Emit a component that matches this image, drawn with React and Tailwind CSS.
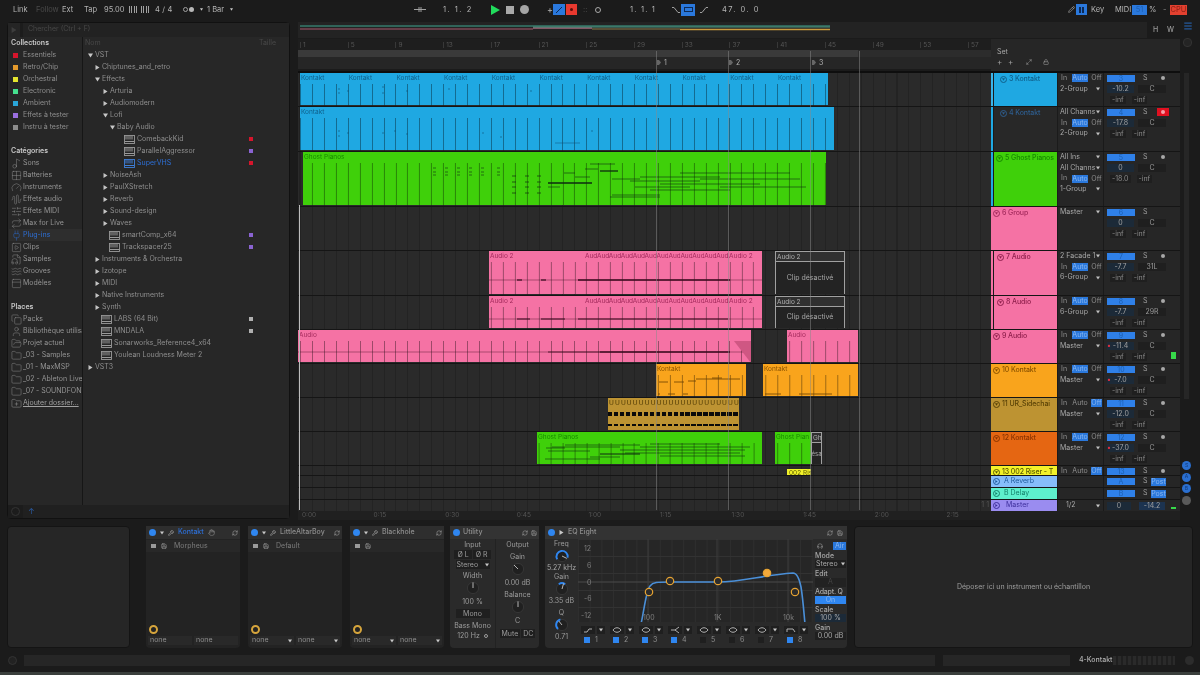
import React from 'react';
import {
  AudioWaveform, Copy, FileAudio, Folder, FolderOpen, FolderPlus, Gauge, Grid2x2, Music2,
  PanelTop, Pencil, Plug, Repeat, SlidersHorizontal, SquarePlay, User, Waves, Wrench, Save, Hand, Headphones,
  Lock, Maximize2, Menu, RefreshCw,
} from 'lucide-react';

const BAR = 11.93;

const Tri = ({ dir = 'down', className = 'text-[#c8c8c8]', s = 5 }) => (
  <svg width={s} height={s} viewBox="0 0 10 10" className={`shrink-0 fill-current ${className}`}>
    {dir === 'down' ? <path d="M0 1h10L5 9z" /> : <path d="M1 0l8 5-8 5z" />}
  </svg>
);

const PluginIcon = ({ blue }) => (
  <svg width="11" height="9" viewBox="0 0 11 9" className={`shrink-0 ${blue ? 'text-[#3f7fd8]' : 'text-[#9a9a9a]'}`}>
    <rect x="0.5" y="0.5" width="10" height="8" fill="none" stroke="currentColor" strokeWidth="0.9" />
    <path d="M2 1v3.5M4 1v3.5M6 1v3.5M8 1v3.5M1 6.5h9" stroke="currentColor" strokeWidth="1" />
  </svg>
);

const collections = [
  ['Essentiels', 'bg-[#d6152c]'],
  ['Retro/Chip', 'bg-[#e59a2c]'],
  ['Orchestral', 'bg-[#e5e52e]'],
  ['Electronic', 'bg-[#45e08e]'],
  ['Ambient', 'bg-[#2aa5d8]'],
  ['Effets à tester', 'bg-[#9b6fe0]'],
  ['Instru à tester', 'bg-[#8c8c8c]'],
];

const categories = [
  ['Sons', Music2],
  ['Batteries', Grid2x2],
  ['Instruments', Gauge],
  ['Effets audio', AudioWaveform],
  ['Effets MIDI', SlidersHorizontal],
  ['Max for Live', Repeat],
  ['Plug-ins', Plug, true],
  ['Clips', SquarePlay],
  ['Samples', FileAudio],
  ['Grooves', Waves],
  ['Modèles', PanelTop],
];

const places = [
  ['Packs', Copy],
  ['Bibliothèque utilisa', User],
  ['Projet actuel', FolderOpen],
  ['_03 - Samples', Folder],
  ['_01 - MaxMSP', Folder],
  ['_02 - Ableton Live', Folder],
  ['_07 - SOUNDFONTS', Folder],
];

// [label, kind, indent class, dot]
const tree = [
  ['VST', 'open', 'pl-[5px]'],
  ['Chiptunes_and_retro', 'closed', 'pl-[12px]'],
  ['Effects', 'open', 'pl-[12px]'],
  ['Arturia', 'closed', 'pl-[20px]'],
  ['Audiomodern', 'closed', 'pl-[20px]'],
  ['Lofi', 'open', 'pl-[20px]'],
  ['Baby Audio', 'open', 'pl-[27px]'],
  ['ComebackKid', 'file', 'pl-[41px]', 'bg-[#d6152c]'],
  ['ParallelAggressor', 'file', 'pl-[41px]', 'bg-[#8a63d2]'],
  ['SuperVHS', 'sel', 'pl-[41px]', 'bg-[#d6152c]'],
  ['NoiseAsh', 'closed', 'pl-[20px]'],
  ['PaulXStretch', 'closed', 'pl-[20px]'],
  ['Reverb', 'closed', 'pl-[20px]'],
  ['Sound-design', 'closed', 'pl-[20px]'],
  ['Waves', 'closed', 'pl-[20px]'],
  ['smartComp_x64', 'file', 'pl-[26px]', 'bg-[#8a63d2]'],
  ['Trackspacer25', 'file', 'pl-[26px]', 'bg-[#8a63d2]'],
  ['Instruments & Orchestra', 'closed', 'pl-[12px]'],
  ['Izotope', 'closed', 'pl-[12px]'],
  ['MIDI', 'closed', 'pl-[12px]'],
  ['Native Instruments', 'closed', 'pl-[12px]'],
  ['Synth', 'closed', 'pl-[12px]'],
  ['LABS (64 Bit)', 'file', 'pl-[18px]', 'bg-[#b0b0b0]'],
  ['MNDALA', 'file', 'pl-[18px]', 'bg-[#b0b0b0]'],
  ['Sonarworks_Reference4_x64', 'file', 'pl-[18px]'],
  ['Youlean Loudness Meter 2', 'file', 'pl-[18px]'],
  ['VST3', 'closed', 'pl-[5px]'],
];

function TopBar() {
  return (
    <div className="flex h-[21px] shrink-0 items-center pb-[2px] pl-[13px] text-[7.5px] text-[#b4b4b4]">
      <span className="w-[23px]">Link</span>
      <span className="w-[26px] text-[#4a4a4a]">Follow</span>
      <span className="w-[22px]">Ext</span>
      <span className="w-[20px]">Tap</span>
      <span className="w-[25px]">95.00</span>
      <span className="flex w-[26px] gap-[3px]">
        <span className="h-[7px] w-[9px] bg-[repeating-linear-gradient(90deg,#a0a0a0_0_1px,transparent_1px_2.5px)]" />
        <span className="h-[7px] w-[9px] bg-[repeating-linear-gradient(90deg,#a0a0a0_0_1px,transparent_1px_2.5px)]" />
      </span>
      <span className="w-[28px] tracking-wide">4 / 4</span>
      <span className="flex w-[17px] items-center gap-[1px]">
        <span className="size-[5px] rounded-full border border-[#a0a0a0]" />
        <span className="size-[5px] rounded-full bg-[#b8b8b8]" />
      </span>
      <span className="w-[7px]"><Tri s={3} /></span>
      <span className="w-[23px]">1 Bar</span>
      <span className="w-[184px]"><Tri s={3} /></span>
      <span className="w-[29px] text-[#a0a0a0]">
        <svg width="12" height="7" viewBox="0 0 12 7" className="stroke-current"><path d="M0 3.5h12M5 1v5M7 1v5" /></svg>
      </span>
      <span className="w-[48px] tracking-[1.5px]">1. 1. 2</span>
      <span className="w-[15px]">
        <svg width="9" height="10" viewBox="0 0 9 10"><path d="M0 0l9 5-9 5z" fill="#21dc5c" /></svg>
      </span>
      <span className="w-[14px]"><span className="block size-[8px] bg-[#a9a9a9]" /></span>
      <span className="w-[27px]"><span className="block size-[9px] rounded-full bg-[#a5a5a5]" /></span>
      <span className="w-[6px] text-[9px] leading-none">+</span>
      <span className="w-[13px]">
        <span className="flex h-[11px] w-[12px] items-center justify-center bg-[#2a78dc]">
          <svg width="8" height="8" viewBox="0 0 8 8" className="stroke-[#0d2a55]"><path d="M1 7L7 1" /></svg>
        </span>
      </span>
      <span className="w-[17px]">
        <span className="flex h-[11px] w-[11px] items-center justify-center bg-[#e8392f]">
          <span className="size-[3px] rounded-full bg-[#5c0c08]" />
        </span>
      </span>
      <span className="w-[12px] text-[#555]">::</span>
      <span className="w-[35px]"><span className="block size-[6px] rounded-full border border-[#a8a8a8]" /></span>
      <span className="w-[42px] tracking-[1.2px]">1. 1. 1</span>
      <span className="w-[9px]">
        <svg width="8" height="6" viewBox="0 0 8 6" className="fill-none stroke-[#a0a0a0]"><path d="M0 0.5h2l4 5h2" /></svg>
      </span>
      <span className="w-[19px]">
        <span className="flex h-[12px] w-[14px] items-center justify-center bg-[#2a78dc]">
          <span className="h-[5px] w-[9px] border border-[#0d2a55]" />
        </span>
      </span>
      <span className="w-[22px]">
        <svg width="8" height="6" viewBox="0 0 8 6" className="fill-none stroke-[#a0a0a0]"><path d="M0 5.5h2l4-5h2" /></svg>
      </span>
      <span className="w-[346px] tracking-[1.5px]">47. 0. 0</span>
      <span className="w-[8px]"><Pencil size={7} /></span>
      <span className="w-[15px]">
        <span className="flex h-[11px] w-[11px] items-center justify-center bg-[#2a78dc]">
          <span className="h-[6px] w-[6px] bg-[repeating-linear-gradient(90deg,#0d2a55_0_2px,transparent_2px_3px)]" />
        </span>
      </span>
      <span className="w-[24px]">Key</span>
      <span className="w-[17px]">MIDI</span>
      <span className="w-[17px]">
        <span className="block h-[10px] w-[15px] bg-[#2a78dc] text-center leading-[10px] text-[#1c5fb0]">51</span>
      </span>
      <span className="w-[14px]">%</span>
      <span className="w-[7px] text-[#888]">-</span>
      <span className="h-[10px] w-[17px] bg-[#e2402f] text-center leading-[10px] text-[#8e2116]">CPU</span>
    </div>
  );
}

function SideRow({ label, Icon, active }) {
  return (
    <div className={`flex h-[12px] items-center gap-[1px] overflow-hidden whitespace-nowrap pl-[2px] ${active ? 'bg-[#2e2e2e] text-[#2d6fd6]' : 'text-[#949494]'}`}>
      <Icon size={11} strokeWidth={1} className="shrink-0" />
      <span>{label}</span>
    </div>
  );
}

function Browser() {
  return (
    <aside className="mt-[1px] flex w-[283px] shrink-0 flex-col rounded-sm border border-[#111] bg-[#272727] text-[7px] leading-[12px]">
      <div className="flex h-[14px] shrink-0 gap-[3px] bg-[#1c1c1c]">
        <span className="flex w-[12px] items-center justify-center bg-[#252525]"><Tri dir="right" s={6} className="text-[#3d3d3d]" /></span>
        <span className="flex-1 bg-[#222] pl-[5px] text-[#484848]">Chercher (Ctrl + F)</span>
      </div>
      <div className="flex min-h-0 flex-1">
        <div className="w-[75px] shrink-0 border-r border-[#161616] pl-[1px]">
          <div className="pl-[2px] font-semibold text-[#c9c9c9]">Collections</div>
          {collections.map(([name, color]) => (
            <div key={name} className="flex h-[12px] items-center gap-[5px] pl-[4px] text-[#8e8e8e]">
              <span className={`size-[5px] shrink-0 ${color}`} />
              {name}
            </div>
          ))}
          <div className="mt-[12px] pl-[2px] font-semibold text-[#c9c9c9]">Catégories</div>
          {categories.map(([name, Icon, active]) => (
            <SideRow key={name} label={name} Icon={Icon} active={active} />
          ))}
          <div className="mt-[12px] pl-[2px] font-semibold text-[#c9c9c9]">Places</div>
          {places.map(([name, Icon]) => (
            <SideRow key={name} label={name} Icon={Icon} />
          ))}
          <div className="flex h-[12px] items-center gap-[1px] pl-[2px] text-[#a0a0a0] underline">
            <FolderPlus size={11} strokeWidth={1} className="shrink-0" />
            Ajouter dossier...
          </div>
        </div>
        <div className="min-w-0 flex-1">
          <div className="flex h-[12px] justify-between pl-[2px] pr-[13px] text-[#484848]">
            <span>Nom</span>
            <span>Taille</span>
          </div>
          {tree.map(([name, kind, indent, dot]) => (
            <div key={name} className={`relative flex h-[12px] items-center gap-[2px] ${indent} ${kind === 'sel' ? 'text-[#2d6fd6]' : 'text-[#8e8e8e]'}`}>
              {kind === 'open' && <Tri />}
              {kind === 'closed' && <Tri dir="right" className="text-[#c4c4c4]" />}
              {(kind === 'file' || kind === 'sel') && <PluginIcon blue={kind === 'sel'} />}
              <span className="truncate">{name}</span>
              {dot && <span className={`absolute left-[166px] top-[4px] size-[4px] ${dot}`} />}
            </div>
          ))}
        </div>
      </div>
      <div className="flex h-[13px] shrink-0 items-center gap-[3px] bg-[#1c1c1c]">
        <span className="ml-[3px] size-[9px] rounded-full border border-[#333]" />
        <span className="flex-1 bg-[#202020] pl-[5px] text-[8px] leading-[13px] text-[#2a5aa0]">↑</span>
      </div>
    </aside>
  );
}

// page x coordinates of the clips, lane starts at x=298
const ghostNotes = [
  ...[433, 445, 457, 469, 481, 497].flatMap((x) => [[x, x + 3, 167, 0.6], [x, x + 3, 171, 0.6], [x, x + 3, 174, 0.6]]),
  ...[512, 525, 537].flatMap((x) => [[x, x + 4, 175, 0.7], [x, x + 4, 181, 0.7], [x, x + 4, 186, 0.7], [x, x + 4, 192, 0.7]]),
  [548, 592, 182, 1.4], [548, 560, 186, 0.6], [564, 575, 172, 0.6], [575, 590, 176, 0.6], [585, 598, 168, 0.6], [600, 618, 170, 1.3],
  [590, 615, 163, 0.6], [612, 640, 178, 0.6], [612, 660, 194, 0.6], [635, 690, 186, 0.6], [630, 700, 180, 0.6], [640, 720, 176, 0.6],
  [650, 730, 189, 0.6], [660, 760, 183, 0.6], [680, 790, 172, 0.6], [700, 800, 178, 0.6], [720, 806, 186, 0.6], [610, 660, 196, 0.6],
];
const ghostNotes2 = [
  [546, 565, 447], [548, 590, 450], [552, 620, 446], [565, 640, 444], [590, 620, 456], [600, 640, 453, 1.2],
  [620, 745, 449], [625, 740, 452], [640, 750, 446], [660, 745, 455], [650, 720, 443], [545, 600, 458],
].map(([a, b, y, t = 0.6]) => [a, b, y, t]);
const cyanMarks = [[338, 88], [338, 92], [347, 90], [382, 86], [382, 92], [406, 90], [448, 88], [530, 90]];
const cyanMarks2 = [[338, 130], [338, 135], [347, 132], [382, 132], [394, 130], [406, 133], [482, 132], [500, 136], [591, 130]];

const laneLines = 'bg-[repeating-linear-gradient(90deg,rgba(0,0,0,0.16)_0_1px,transparent_1px_11.93px)]';

function Clip({ x, to, color, label, textColor, children, labels }) {
  return (
    <div
      className={`absolute bottom-[1px] top-0 flex flex-col overflow-hidden ${color}`}
      style={{ left: x - 298, width: to - x }}
    >
      <div className={`flex h-[11px] shrink-0 overflow-hidden whitespace-nowrap pl-[1px] text-[6.5px] leading-[11px] ${textColor}`}>
        {label}
        {labels}
      </div>
      <div
        className="min-h-0 flex-1 bg-[repeating-linear-gradient(90deg,rgba(0,0,0,0.36)_0_1px,transparent_1px_11.93px)]"
        style={{ backgroundPosition: `${((300 - x) % BAR + BAR) % BAR}px 0` }}
      />
      {children}
    </div>
  );
}

// marks are given in page coordinates, the svg maps them onto the clip
function Marks({ x, to, y, h, notes, dark = '#0e2b10' }) {
  return (
    <svg className="absolute left-0 top-0" width={to - x} height={h} viewBox={`${x} ${y} ${to - x} ${h}`}>
      {notes.map(([a, b, ny, t = 0.8], i) => (
        <line key={i} x1={a} x2={b} y1={ny} y2={ny} stroke={dark} strokeWidth={t} />
      ))}
    </svg>
  );
}

function Disabled({ x, to, label, body, small }) {
  return (
    <div
      className="absolute bottom-[1px] top-0 flex flex-col border-x border-t border-[#a0a0a0] bg-[#232323]"
      style={{ left: x - 298, width: to - x }}
    >
      <div className="h-[10px] shrink-0 overflow-hidden border-b border-[#a0a0a0] bg-[#303030] pl-[1px] text-[6.5px] leading-[10px] text-[#b0b0b0]">{label}</div>
      <div className={`flex flex-1 items-center justify-center overflow-hidden text-[#a8a8a8] ${small ? 'text-[6px]' : 'text-[7px]'}`}>{body}</div>
    </div>
  );
}

const audHeads = Array.from({ length: 12 }, (_, i) => i);

function AudioLabels() {
  return (
    <>
      <span className="w-[95px] shrink-0">Audio 2</span>
      {audHeads.map((i) => (
        <span key={i} className="w-[11.93px] shrink-0 overflow-hidden">Aud</span>
      ))}
      <span className="ml-[1px]">Audio 2</span>
    </>
  );
}

const LANES = {
  3: (
    <Clip x={300} to={828} color="bg-[#1fa8e2]" textColor="text-[#0f5f8a]"
      labels={Array.from({ length: 11 }, (_, i) => <span key={i} className="w-[47.7px] shrink-0">Kontakt</span>)}>
      <Marks x={300} to={828} y={72} h={34} notes={cyanMarks.map(([a, y]) => [a, a + 2, y, 0.6])} dark="#0f4f75" />
    </Clip>
  ),
  4: (
    <Clip x={300} to={834} color="bg-[#1fa8e2]" label="Kontakt" textColor="text-[#0f5f8a]">
      <Marks x={300} to={834} y={106} h={45} notes={[...cyanMarks2.map(([a, y]) => [a, a + 2, y, 0.6]), [555, 580, 142, 0.5]]} dark="#0f4f75" />
    </Clip>
  ),
  5: (
    <Clip x={303} to={826} color="bg-[#3fd00a]" label="Ghost Pianos" textColor="text-[#178a00]">
      <Marks x={303} to={826} y={151} h={55} notes={ghostNotes} />
    </Clip>
  ),
  7: (
    <>
      <Clip x={489} to={762} color="bg-[#f572a4]" textColor="text-[#a32a5c]" labels={<AudioLabels />}>
        <Marks x={489} to={762} y={250} h={45} notes={[[489, 762, 279, 0.4], [517, 522, 279, 1.2], [541, 546, 279, 1.2], [578, 730, 279, 1.3]]} dark="#3a0a1e" />
      </Clip>
      <Disabled x={775} to={845} label="Audio 2" body="Clip désactivé" />
    </>
  ),
  8: (
    <>
      <Clip x={489} to={762} color="bg-[#f572a4]" textColor="text-[#a32a5c]" labels={<AudioLabels />}>
        <Marks x={489} to={762} y={295} h={34} notes={[[489, 762, 318, 0.4], [517, 530, 318, 1], [541, 565, 318, 1], [578, 728, 318, 1.1]]} dark="#3a0a1e" />
      </Clip>
      <Disabled x={775} to={845} label="Audio 2" body="Clip désactivé" />
    </>
  ),
  9: (
    <>
      <Clip x={298} to={751} color="bg-[#f572a4]" label="Audio" textColor="text-[#a32a5c]">
        <Marks x={298} to={751} y={329} h={34} notes={[[298, 751, 351, 0.4], [548, 600, 351, 0.8], [600, 730, 351, 1.3]]} dark="#3a0a1e" />
        <svg className="absolute right-0 top-0" width="17" height="33" viewBox="0 0 17 33"><path d="M0 11h17v22z" fill="#cf5783" /></svg>
      </Clip>
      <Clip x={787} to={858} color="bg-[#f572a4]" label="Audio" textColor="text-[#a32a5c]" />
    </>
  ),
  10: (
    <>
      <Clip x={656} to={746} color="bg-[#f9a41c]" label="Kontakt" textColor="text-[#8a5200]">
        <Marks x={656} to={746} y={363} h={34} notes={[[659, 668, 381], [674, 684, 381], [688, 696, 380], [696, 740, 378], [712, 722, 377], [658, 660, 393], [668, 675, 393], [683, 688, 393]]} dark="#6a3f00" />
      </Clip>
      <Clip x={763} to={858} color="bg-[#f9a41c]" label="Kontakt" textColor="text-[#8a5200]">
        <Marks x={763} to={858} y={363} h={34} notes={[[765, 781, 393], [799, 832, 393]]} dark="#6a3f00" />
      </Clip>
    </>
  ),
  11: (
    <div className="absolute bottom-[1px] left-[310px] top-0 flex w-[131px] flex-col overflow-hidden bg-[#bd9332] pt-[1px]">
      <div className="flex h-[9px] shrink-0 text-[6.5px] leading-[9px] text-[#4a3600]">
        {Array.from({ length: 22 }, (_, i) => <span key={i} className="w-[5.96px] shrink-0 pl-[1px]">U</span>)}
      </div>
      <div className="mt-[4px] h-[4px] bg-[repeating-linear-gradient(90deg,#0a0a0a_0_4.4px,#bd9332_4.4px_5.96px)]" />
      <div className="mt-[8px] h-[2px] bg-[repeating-linear-gradient(90deg,#0a0a0a_0_4.4px,#bd9332_4.4px_5.96px)]" />
    </div>
  ),
  12: (
    <>
      <Clip x={537} to={762} color="bg-[#3fd00a]" label="Ghost Pianos" textColor="text-[#178a00]">
        <Marks x={537} to={762} y={431} h={34} notes={ghostNotes2} />
      </Clip>
      <Clip x={775} to={811} color="bg-[#3fd00a]" label="Ghost Pian" textColor="text-[#178a00]" />
      <Disabled x={811} to={822} label="Gh" body="ésa" small />
    </>
  ),
  13: (
    <div className="absolute bottom-0 left-[489px] top-[3px] w-[24px] overflow-hidden whitespace-nowrap bg-[#f2f22a] pl-[2px] text-[6.5px] leading-[8px] text-[#5a5a00]">002 Ris</div>
  ),
};

const Sel = ({ text }) => (
  <div className="flex h-[10.7px] items-center justify-between pr-[3px] text-[#a8a8a8]">
    <span className="overflow-hidden whitespace-nowrap pl-[2px]">{text}</span>
    <Tri s={4} className="text-[#c0c0c0]" />
  </div>
);

const Mon = ({ active }) => (
  <div className="flex h-[10.7px] items-center gap-[3px] pl-[3px] text-[#8f8f8f]">
    <span className="w-[8px]">In</span>
    <span className={`w-[16px] text-center leading-[8px] ${active === 'auto' ? 'bg-[#2a78dc] text-[#8ab6ee]' : ''}`}>Auto</span>
    <span className={`w-[11px] text-center leading-[8px] ${active === 'off' ? 'bg-[#2a78dc] text-[#8ab6ee]' : ''}`}>Off</span>
  </div>
);

function Mixer({ num, vol, pan, meters = ['-inf', '-inf'], arm, armRed, hot, single }) {
  return (
    <div className="flex flex-col">
      <div className="flex h-[10.7px] items-center">
        <span className="ml-[3px] h-[7px] w-[28px] bg-[#2f80e8] text-center text-[7px] leading-[7px] text-[#1c5fb0]">{num}</span>
        <span className="ml-[8px] w-[6px] text-[#9a9a9a]">S</span>
        {arm && <span className={`ml-[8px] flex h-[8px] w-[12px] items-center justify-center ${armRed ? 'bg-[#e01020]' : ''}`}><span className={`size-[4px] rounded-full ${armRed ? 'bg-[#f4a0a8]' : 'bg-[#a8a8a8]'}`} /></span>}
      </div>
      {!single && (
        <>
          <div className="flex h-[10.7px] items-center gap-[4px] pl-[3px]">
            <span className="relative h-[8px] w-[27px] bg-[#1c2a38] text-center leading-[8px] text-[#a0a0a0]">
              {hot && <span className="absolute left-0 top-0 text-[#e03040]">•</span>}
              {vol}
            </span>
            <span className="h-[8px] w-[28px] bg-[#1f1f1f] text-center leading-[8px] text-[#9a9a9a]">{pan}</span>
          </div>
          <div className="flex h-[10.7px] items-center gap-[6px] pl-[6px] text-[#8a8a8a]">
            <span className="bg-[#1f1f1f] px-[2px] leading-[8px]">{meters[0]}</span>
            <span className="bg-[#1f1f1f] px-[2px] leading-[8px]">{meters[1]}</span>
          </div>
        </>
      )}
    </div>
  );
}

const tracks = [
  { id: 3, h: 'h-[34px]', name: '3 Kontakt', head: 'bg-[#1fa8e2] text-[#0f5f8a]', ring: 'border-[#0f5f8a]', strip: 'bg-[#3ab4ea]', pad: 'pl-[6px]', io: [['m', 'auto'], ['s', '2-Group']], mix: { num: 3, vol: '-10.2', pan: 'C', arm: true } },
  { id: 4, h: 'h-[45px]', name: '4 Kontakt', head: 'bg-[#282828] text-[#2e5d8e]', ring: 'border-[#2e5d8e]', strip: 'bg-[#1fa8e2]', pad: 'pl-[6px]', io: [['s', 'All Channs'], ['m', 'auto'], ['s', '2-Group']], mix: { num: 4, vol: '-17.8', pan: 'C', arm: true, armRed: true } },
  { id: 5, h: 'h-[55px]', name: '5 Ghost Pianos', head: 'bg-[#3fd00a] text-[#178a00]', ring: 'border-[#178a00]', strip: 'bg-[#1fa8e2]', pad: 'pl-[2px]', io: [['s', 'All Ins'], ['s', 'All Channs'], ['m', 'auto'], ['s', '1-Group']], mix: { num: 5, vol: '0', pan: 'C', meters: ['-18.0', '-inf'], arm: true } },
  { id: 6, h: 'h-[44px]', name: '6 Group', head: 'bg-[#f572a4] text-[#a32a5c]', ring: 'border-[#a32a5c]', pad: 'pl-[2px]', io: [['s', 'Master']], mix: { num: 6, vol: '0', pan: 'C' } },
  { id: 7, h: 'h-[45px]', name: '7 Audio', head: 'bg-[#f572a4] text-[#8f1f4c]', ring: 'border-[#8f1f4c]', strip: 'bg-[#f572a4]', pad: 'pl-[3px]', io: [['s', '2 Facade 1'], ['m', 'auto'], ['s', '6-Group']], mix: { num: 7, vol: '-7.7', pan: '31L', arm: true } },
  { id: 8, h: 'h-[34px]', name: '8 Audio', head: 'bg-[#f572a4] text-[#8f1f4c]', ring: 'border-[#8f1f4c]', strip: 'bg-[#f572a4]', pad: 'pl-[3px]', io: [['m', 'auto'], ['s', '6-Group']], mix: { num: 8, vol: '-7.7', pan: '29R', arm: true } },
  { id: 9, h: 'h-[34px]', name: '9 Audio', head: 'bg-[#f572a4] text-[#8f1f4c]', ring: 'border-[#8f1f4c]', pad: 'pl-[2px]', io: [['m', 'auto'], ['s', 'Master']], mix: { num: 9, vol: '-11.4', pan: 'C', arm: true, hot: true } },
  { id: 10, h: 'h-[34px]', name: '10 Kontakt', head: 'bg-[#f9a41c] text-[#8a5200]', ring: 'border-[#8a5200]', pad: 'pl-[2px]', io: [['m', 'auto'], ['s', 'Master']], mix: { num: 10, vol: '-7.0', pan: 'C', arm: true, hot: true } },
  { id: 11, h: 'h-[34px]', name: '11 UR_Sidechai', head: 'bg-[#bd9332] text-[#5a4206]', ring: 'border-[#5a4206]', pad: 'pl-[2px]', io: [['m', 'off'], ['s', 'Master']], mix: { num: 11, vol: '-12.0', pan: 'C', arm: true } },
  { id: 12, h: 'h-[34px]', name: '12 Kontakt', head: 'bg-[#e56612] text-[#8a3400]', ring: 'border-[#8a3400]', pad: 'pl-[2px]', io: [['m', 'auto'], ['s', 'Master']], mix: { num: 12, vol: '-37.0', pan: 'C', arm: true, hot: true } },
  { id: 13, h: 'h-[10px]', name: '13 002 Riser - T', head: 'bg-[#f2f22a] text-[#5a5a00]', ring: 'border-[#5a5a00]', pad: 'pl-[2px]', io: [['m', 'off']], mix: { num: 13, single: true, arm: true } },
];

function TrackRow({ t }) {
  return (
    <div className={`flex ${t.h} shrink-0 border-b border-[#151515] text-[7px]`}>
      <div className={`relative w-[693px] shrink-0 overflow-hidden bg-[#2a2a2a] ${laneLines} bg-[position:2px_0]`}>{LANES[t.id]}</div>
      <div className={`flex w-[66px] shrink-0 overflow-hidden ${t.head}`}>
        {t.strip && <span className={`w-[3px] shrink-0 border-r border-[#1a1a1a] ${t.strip}`} />}
        <div className={`flex h-[12px] min-w-0 items-center gap-[2px] whitespace-nowrap ${t.pad}`}>
          <span className={`flex size-[7px] shrink-0 items-center justify-center rounded-full border ${t.ring}`}><Tri s={3} className="text-inherit" /></span>
          <span className="font-medium tracking-[-0.1px]">{t.name}</span>
        </div>
      </div>
      <div className="ml-[1px] w-[46px] shrink-0 overflow-hidden border-r border-[#1a1a1a] bg-[#262626]">
        {t.io.map(([kind, v], i) => (kind === 'm' ? <Mon key={i} active={v} /> : <Sel key={i} text={v} />))}
      </div>
      <div className="w-[65px] shrink-0 overflow-hidden bg-[#262626]"><Mixer {...t.mix} /></div>
      <div className="relative flex-1 bg-[#262626]">
        {t.id === 9 && <span className="absolute bottom-[4px] left-[2px] h-[7px] w-[5px] bg-[#37d94a]" />}
      </div>
    </div>
  );
}

const ReturnRow = ({ h, name, color, num, text }) => (
  <div className={`flex ${h} shrink-0 border-b border-[#151515] text-[7px]`}>
    <div className={`w-[693px] shrink-0 bg-[#2a2a2a] ${laneLines} bg-[position:2px_0]`} />
    <div className={`flex w-[66px] shrink-0 items-center gap-[4px] pl-[2px] ${color} ${text}`}>
      <span className="flex size-[7px] items-center justify-center rounded-full border border-current"><Tri dir="right" s={3} className="text-inherit" /></span>
      {name}
    </div>
    <div className="ml-[1px] w-[46px] shrink-0 border-r border-[#1a1a1a] bg-[#262626]" />
    <div className="flex w-[65px] shrink-0 items-center bg-[#262626]">
      <span className="ml-[3px] h-[7px] w-[28px] bg-[#2f80e8] text-center leading-[7px] text-[#1c5fb0]">{num}</span>
      <span className="ml-[8px] w-[6px] text-[#9a9a9a]">S</span>
      <span className="ml-[2px] h-[8px] w-[15px] bg-[#2a78dc] text-center leading-[8px] text-[#8ab6ee]">Post</span>
    </div>
    <div className="flex-1 bg-[#262626]" />
  </div>
);

const rulerBars = [1, 5, 9, 13, 17, 21, 25, 29, 33, 37, 41, 45, 49, 53, 57];
const rulerTimes = ['0:00', '0:15', '0:30', '0:45', '1:00', '1:15', '1:30', '1:45', '2:00', '2:15'];

function Flag({ n, x }) {
  return (
    <span className="absolute top-[1px] flex items-center gap-[3px] text-[7px] leading-[9px] text-[#b0b0b0]" style={{ left: x - 298 }}>
      <svg width="4" height="5" viewBox="0 0 4 5"><path d="M0 0h2l2 2.5L2 5H0z" fill="#666" /></svg>
      {n}
    </span>
  );
}

function Arrangement() {
  return (
    <section className="relative ml-[8px] flex w-[882px] shrink-0 flex-col">
      <div className="flex h-[18px] shrink-0 items-center">
        <svg width="849" height="16" viewBox="298 22 849 16" className="bg-[#232323]">
          <line x1="300" x2="830" y1="26" y2="26" stroke="#3fa58f" />
          <line x1="300" x2="533" y1="29" y2="29" stroke="#a8586e" />
          <line x1="533" x2="592" y1="28" y2="28" stroke="#e48aa8" />
          <line x1="592" x2="680" y1="29" y2="29" stroke="#8c7a48" />
          <line x1="680" x2="830" y1="29.5" y2="29.5" stroke="#c99a3c" strokeWidth="1.5" />
          <line x1="533" x2="830" y1="27" y2="27" stroke="#4a8f7c" />
        </svg>
        <span className="ml-[6px] w-[14px] text-[7px] font-medium text-[#9a9a9a]">H</span>
        <span className="text-[7px] font-medium text-[#9a9a9a]">W</span>
      </div>
      <div className="flex h-[32px] shrink-0">
        <div className="w-[693px] shrink-0">
          <div className="relative h-[11px] bg-[#1e1e1e] text-[6.5px] leading-[11px] text-[#555]">
            {rulerBars.map((b) => (
              <span key={b} className="absolute top-[3px] border-l border-[#383838] pl-[2px] leading-[6px]" style={{ left: 2 + (b - 1) * BAR }}>{b}</span>
            ))}
          </div>
          <div className="flex h-[7px]">
            <span className="w-[560px] bg-[#3a3a3a]" />
            <span className="flex-1 bg-[#2c2c2c]" />
          </div>
          <div className="relative h-[12px] bg-[#262626] text-[#b0b0b0]">
            <Flag n="1" x={657} />
            <Flag n="2" x={729} />
            <Flag n="3" x={812} />
          </div>
        </div>
        <div className="flex-1 bg-[#262626] pl-[6px] pt-[8px] text-[7px] text-[#a8a8a8]">
          <div className="leading-[9px]">Set</div>
          <div className="flex items-center pt-[2px] text-[#a0a0a0]">
            <span className="w-[11px] text-[8px] leading-none">+</span>
            <span className="w-[18px] text-[8px] leading-none">+</span>
            <Maximize2 size={6} className="mr-[11px]" />
            <Lock size={6} />
          </div>
        </div>
      </div>
      <div className="h-[2px] shrink-0 bg-[#0e0e0e]" />
      <div className="flex flex-col">
        {tracks.map((t) => <TrackRow key={t.id} t={t} />)}
        <ReturnRow h="h-[12px]" name="A Reverb" color="bg-[#86bdfa]" num="A" text="text-[#1f5a9c]" />
        <ReturnRow h="h-[12px]" name="B Delay" color="bg-[#5ef0cd]" num="B" text="text-[#14806a]" />
        <div className="flex h-[11px] shrink-0 text-[7px]">
          <div className={`flex w-[693px] shrink-0 justify-end bg-[#2a2a2a] pr-[2px] text-[#555] ${laneLines} bg-[position:2px_0]`}>1 1</div>
          <div className="flex w-[66px] shrink-0 items-center gap-[6px] bg-[#9a8cf0] pl-[2px] text-[#3d2f9c]">
            <span className="flex size-[7px] items-center justify-center rounded-full border border-current"><Tri dir="right" s={3} className="text-inherit" /></span>
            Master
          </div>
          <div className="ml-[1px] flex w-[46px] shrink-0 items-center justify-between border-r border-[#1a1a1a] bg-[#262626] pl-[8px] pr-[3px] text-[#a8a8a8]">
            1/2 <Tri s={4} />
          </div>
          <div className="flex w-[65px] shrink-0 items-center gap-[8px] bg-[#262626] pl-[3px]">
            <span className="h-[8px] w-[24px] bg-[#1c2a38] text-center leading-[8px] text-[#9a9a9a]">0</span>
            <span className="h-[8px] w-[26px] bg-[#1c3350] text-center leading-[8px] text-[#a0a0a0]">-14.2</span>
          </div>
          <div className="relative flex-1 bg-[#262626]"><span className="absolute bottom-[2px] left-[2px] h-[2px] w-[5px] bg-[#37d94a]" /></div>
        </div>
      </div>
      <div className="relative h-[9px] shrink-0 bg-[#202020] text-[6.5px] leading-[9px] text-[#555]">
        {rulerTimes.map((t, i) => (
          <span key={t} className="absolute" style={{ left: 4 + i * 71.6 }}>{t}</span>
        ))}
      </div>
      {/* locator lines and the insert marker run over the lanes */}
      {[656, 728, 810, 859].map((x) => (
        <span key={x} className="absolute bottom-[9px] top-[30px] w-px bg-[#8a8a8a]/50" style={{ left: x - 298 }} />
      ))}
      <span className="absolute bottom-[9px] left-[1px] top-[184px] w-px bg-[#bdbdbd]" />
    </section>
  );
}

function RightStrip() {
  return (
    <div className="relative flex w-[20px] flex-col pl-[3px]">
      <Menu size={10} className="text-[#2a78dc]" />
      <span className="mt-[7px] size-[9px] rounded-sm border border-[#333] bg-[#242424]" />
      <span className="ml-[1px] mt-[26px] h-[326px] w-[5px] bg-[#262626]" />
      <div className="absolute left-[2px] top-[440px] flex flex-col gap-[2.5px]">
        {['S', 'A', 'B'].map((k) => (
          <span key={k} className="flex size-[9px] items-center justify-center rounded-full bg-[#2a6fd0] text-[5px] text-[#123a7a]">{k}</span>
        ))}
        <span className="size-[9px] rounded-full bg-[#5a5a5a]" />
      </div>
    </div>
  );
}

const DeviceHead = ({ title, blue, children }) => (
  <div className="flex h-[13px] shrink-0 items-center gap-[4px] bg-[#2e2e2e] pl-[3px] pr-[2px] text-[7px] font-medium">
    <span className="size-[7px] shrink-0 rounded-full bg-[#2f86f0]" />
    <Tri s={4} />
    <Wrench size={6} className="text-[#c0c0c0]" />
    <span className={blue ? 'text-[#2d6fd6]' : 'text-[#8e8e8e]'}>{title}</span>
    {children}
    <span className="flex-1" />
    <RefreshCw size={6} className="text-[#a8a8a8]" />
  </div>
);

function PluginDevice({ title, blue, preset, margin, locked, children }) {
  return (
    <div className={`flex w-[94px] shrink-0 flex-col rounded-sm bg-[#232323] ${margin}`}>
      <DeviceHead title={title} blue={blue}>{children}</DeviceHead>
      <div className="mt-[1px] flex h-[12px] items-center gap-[3px] bg-[#282828] pl-[5px] text-[7px] text-[#7c7c7c]">
        <span className="h-[4px] w-[5px] bg-[#9a9a9a]" />
        <Save size={6} className="ml-[2px] text-[#b0b0b0]" />
        <span className="ml-[4px]">{preset}</span>
      </div>
      <div className="flex-1" />
      <span className="mb-[2px] ml-[3px] size-[9px] rounded-full border-2 border-[#d6a53c]" />
      <div className="mb-[3px] flex gap-[2px] px-[2px] text-[7px] text-[#8e8e8e]">
        {['none', 'none'].map((n, i) => (
          <span key={i} className="flex h-[9px] w-[44px] items-center justify-between bg-[#292929] px-[2px]">
            {n}{!locked && <Tri s={4} />}
          </span>
        ))}
      </div>
    </div>
  );
}

// knobs are drawn in a 20 unit box and scaled to their size
function Knob({ arc, color = '#2f86f0', pointer = 'M10 10 L10 3', size = 16 }) {
  return (
    <svg width={size} height={size} viewBox="0 0 20 20" className="shrink-0">
      <circle cx="10" cy="10" r="7" fill="#202020" stroke="#3a3a3a" strokeWidth="1" />
      {arc && <path d={arc} fill="none" stroke={color} strokeWidth="2.4" />}
      <path d={pointer} stroke="#bdbdbd" strokeWidth="1.2" />
    </svg>
  );
}

function Utility() {
  return (
    <div className="ml-[6px] flex w-[89px] shrink-0 flex-col rounded-sm bg-[#2a2a2a]">
      <div className="flex h-[13px] shrink-0 items-center gap-[3px] bg-[#333] pl-[3px] pr-[2px] text-[7px] font-medium text-[#8e8e8e]">
        <span className="size-[7px] rounded-full bg-[#2f86f0]" />
        Utility
        <span className="flex-1" />
        <RefreshCw size={6} className="text-[#a8a8a8]" />
        <Save size={6} className="text-[#a8a8a8]" />
      </div>
      <div className="flex flex-1 text-[7px] leading-[9px] text-[#9c9c9c]">
        <div className="flex w-[45px] flex-col items-center pt-[1px]">
          <span className="mb-[1px]">Input</span>
          <div className="mb-[1px] flex gap-[1px]">
            <span className="bg-[#1f1f1f] px-[3px]">Ø L</span>
            <span className="bg-[#1f1f1f] px-[3px]">Ø R</span>
          </div>
          <span className="mb-[2px] flex w-[34px] items-center justify-between bg-[#1f1f1f] px-[1px]">Stereo <Tri s={4} /></span>
          <span>Width</span>
          <Knob />
          <span className="mb-[3px] mt-[1px]">100 %</span>
          <span className="mb-[3px] w-[34px] bg-[#1f1f1f] text-center">Mono</span>
          <span className="mb-[1px]">Bass Mono</span>
          <span className="flex items-center gap-[4px]">120 Hz <span className="size-[4px] rounded-full border border-[#9c9c9c]" /></span>
        </div>
        <div className="flex flex-1 flex-col items-center border-l border-[#222] pt-[1px]">
          <span className="mb-[3px]">Output</span>
          <span>Gain</span>
          <Knob pointer="M10 10 L5 5" />
          <span className="mb-[3px] mt-[1px]">0.00 dB</span>
          <span>Balance</span>
          <Knob />
          <span className="mb-[4px] mt-[1px]">C</span>
          <div className="flex gap-[1px]">
            <span className="bg-[#1f1f1f] px-[2px]">Mute</span>
            <span className="bg-[#1f1f1f] px-[2px]">DC</span>
          </div>
        </div>
      </div>
    </div>
  );
}

const bands = [
  ['M1 6h3l2-3h3', true], ['M1 4c2-3 6-3 8 0c-2 3-6 3-8 0', true], ['M1 4c2-3 6-3 8 0c-2 3-6 3-8 0', true], ['M1 4h4l4-3M5 4l4 3', true],
  ['M1 4c2-3 6-3 8 0c-2 3-6 3-8 0', false], ['M1 4c2-3 6-3 8 0c-2 3-6 3-8 0', false], ['M1 4c2-3 6-3 8 0c-2 3-6 3-8 0', false], ['M1 3h6l2 3M1 3v3', true],
];

const eqDots = [[71, 53, false], [92, 42, false], [140, 42, false], [189, 34, true], [217, 53, false]];

function EqEight() {
  return (
    <div className="ml-[6px] flex w-[302px] shrink-0 flex-col rounded-sm bg-[#2a2a2a]">
      <div className="flex h-[13px] shrink-0 items-center gap-[4px] bg-[#333] pl-[3px] pr-[4px] text-[7px] font-medium text-[#8e8e8e]">
        <span className="size-[7px] rounded-full bg-[#2f86f0]" />
        <Tri dir="right" s={5} />
        EQ Eight
        <span className="flex-1" />
        <RefreshCw size={6} className="text-[#a8a8a8]" />
        <Save size={6} className="text-[#a8a8a8]" />
      </div>
      <div className="flex min-h-0 flex-1">
        <div className="flex w-[33px] shrink-0 flex-col items-center pt-[1px] text-[7px] leading-[8px] text-[#9c9c9c]">
          <span>Freq</span>
          <Knob arc="M4 14 A7 7 0 1 1 17 12" pointer="M10 10 L16 13" />
          <span className="mb-[1px] whitespace-nowrap text-[#a8a8a8]">5.27 kHz</span>
          <span>Gain</span>
          <Knob arc="M6 4 A7 7 0 0 1 14 4" pointer="M10 10 L12 3" />
          <span className="mb-[4px] whitespace-nowrap">3.35 dB</span>
          <span>Q</span>
          <Knob arc="M8 3 A7 7 0 0 0 5 15" pointer="M10 10 L6 5" />
          <span>0.71</span>
        </div>
        <div className="flex w-[235px] shrink-0 flex-col">
          <div className="relative h-[83px] shrink-0 bg-[#262626] bg-[linear-gradient(#323232_1px,transparent_1px),linear-gradient(90deg,#2e2e2e_1px,transparent_1px)] bg-[size:100%_17px,11.7px_100%] text-[7px] leading-[9px] text-[#7e7e7e]">
            <svg width="235" height="83" viewBox="0 0 235 83" className="absolute left-0 top-0">
              <line x1="0" x2="235" y1="43" y2="43" stroke="#4a4a4a" />
              <line x1="70" x2="70" y1="0" y2="83" stroke="#3c3c3c" />
              <line x1="139" x2="139" y1="0" y2="83" stroke="#3c3c3c" />
              <line x1="210" x2="210" y1="0" y2="83" stroke="#3c3c3c" />
              <path d="M63 85 C66 72 68 52 72 47 C75 43 78 43 95 43 L140 43 C165 43 185 36 215 34 C218 34 221 38 223 48 C225 60 226 75 227 85" fill="none" stroke="#4a8fd8" strokeWidth="1.6" />
              {eqDots.map(([x, y, filled]) => (
                <circle key={x} cx={x} cy={y} r="3.7" fill={filled ? '#f2a93b' : '#2c2c2c'} stroke="#e6a332" strokeWidth="1.2" />
              ))}
            </svg>
            <span className="absolute left-[6px] top-[5px]">12</span>
            <span className="absolute left-[9px] top-[22px]">6</span>
            <span className="absolute left-[9px] top-[39px]">0</span>
            <span className="absolute left-[6px] top-[55px]">-6</span>
            <span className="absolute left-[3px] top-[72px]">-12</span>
            <span className="absolute bottom-0 left-[65px]">100</span>
            <span className="absolute bottom-0 left-[136px]">1K</span>
            <span className="absolute bottom-0 left-[205px]">10k</span>
          </div>
          <div className="flex flex-1 pl-[3px] pt-[3px]">
            {bands.map(([d, on], i) => (
              <div key={i} className="flex w-[29.6px] flex-col items-start">
                <div className="flex h-[9px] items-center gap-[2px]">
                  <span className="flex h-[8px] w-[14px] items-center justify-center bg-[#1f1f1f]">
                    <svg width="10" height="8" viewBox="0 0 10 8" className="fill-none stroke-[#b0b0b0]"><path d={d} /></svg>
                  </span>
                  <span className="flex h-[8px] w-[8px] items-center justify-center bg-[#1f1f1f]"><Tri s={4} /></span>
                </div>
                <div className="mt-[2px] flex items-center gap-[5px] pl-[3px] text-[7px] leading-[8px] text-[#8e8e8e]">
                  <span className={`size-[6px] ${on ? 'bg-[#2f86f0]' : 'bg-[#1f1f1f]'}`} />
                  {i + 1}
                </div>
              </div>
            ))}
          </div>
        </div>
        <div className="flex min-w-0 flex-1 flex-col whitespace-nowrap pl-[2px] pr-[1px] pt-[3px] text-[7px] leading-[8px] text-[#a8a8a8]">
          <div className="mb-[2px] flex h-[8px] items-center justify-between">
            <Headphones size={6} className="ml-[2px]" />
            <span className="w-[13px] bg-[#2a78dc] text-center text-[#8ab6ee]">Air</span>
          </div>
          <span className="font-medium">Mode</span>
          <span className="mb-[2px] flex items-center justify-between bg-[#1f1f1f] px-[1px]">Stereo <Tri s={4} /></span>
          <span className="font-medium">Edit</span>
          <span className="mb-[1px] h-[9px] bg-[#222] text-center text-[#444]">A</span>
          <span className="font-medium tracking-[-0.2px]">Adapt. Q</span>
          <span className="mb-[2px] bg-[#2f86f0] text-center text-[#8ab6ee]">On</span>
          <span className="font-medium">Scale</span>
          <span className="mb-[2px] bg-[#1c2a38] text-center">100 %</span>
          <span className="font-medium">Gain</span>
          <span className="bg-[#1f1f1f] text-center">0.00 dB</span>
        </div>
      </div>
    </div>
  );
}

function DeviceRack() {
  return (
    <div className="flex h-[123px] shrink-0 pl-[7px] pt-[1px]">
      <div className="w-[123px] shrink-0 rounded-sm border border-[#141414] bg-[#262626]" />
      <PluginDevice title="Kontakt" blue preset="Morpheus" margin="ml-[16px]" locked>
        <Hand size={7} className="text-[#8e8e8e]" />
      </PluginDevice>
      <PluginDevice title="LittleAltarBoy" preset="Default" margin="ml-[8px]" />
      <PluginDevice title="Blackhole" preset="" margin="ml-[8px]" />
      <Utility />
      <EqEight />
      <div className="ml-[7px] flex w-[339px] shrink-0 items-center justify-center rounded-sm border border-[#141414] bg-[#262626] text-[7px] text-[#9e9e9e]">
        Déposer ici un instrument ou échantillon
      </div>
    </div>
  );
}

function StatusBar() {
  return (
    <div className="mt-[7px] flex h-[11px] shrink-0 items-center pl-[8px] text-[7px] text-[#b0b0b0]">
      <span className="size-[9px] rounded-full border border-[#333] bg-[#222]" />
      <span className="ml-[7px] h-[11px] w-[911px] bg-[#262626]" />
      <span className="ml-[8px] h-[11px] w-[127px] bg-[#262626]" />
      <span className="ml-[9px] w-[34px] font-medium">4-Kontakt</span>
      <span className="h-[9px] w-[62px] bg-[repeating-linear-gradient(90deg,#2a2a2a_0_3px,#1f1f1f_3px_5px)]" />
      <span className="ml-[10px] size-[9px] rounded-full bg-[#2c2c2c]" />
    </div>
  );
}

export default function App() {
  return (
    <div className="flex h-[675px] w-[1200px] flex-col overflow-hidden bg-[#1b1b1b] font-['Inter',sans-serif] text-[#a6a6a6] blur-[0.3px]">
      <TopBar />
      <div className="flex h-[498px] shrink-0 pl-[7px]">
        <Browser />
        <Arrangement />
        <RightStrip />
      </div>
      <div className="h-[6px] shrink-0" />
      <DeviceRack />
      <StatusBar />
      <div className="mt-auto h-[3px] shrink-0 bg-[#3a3f3c]" />
    </div>
  );
}
